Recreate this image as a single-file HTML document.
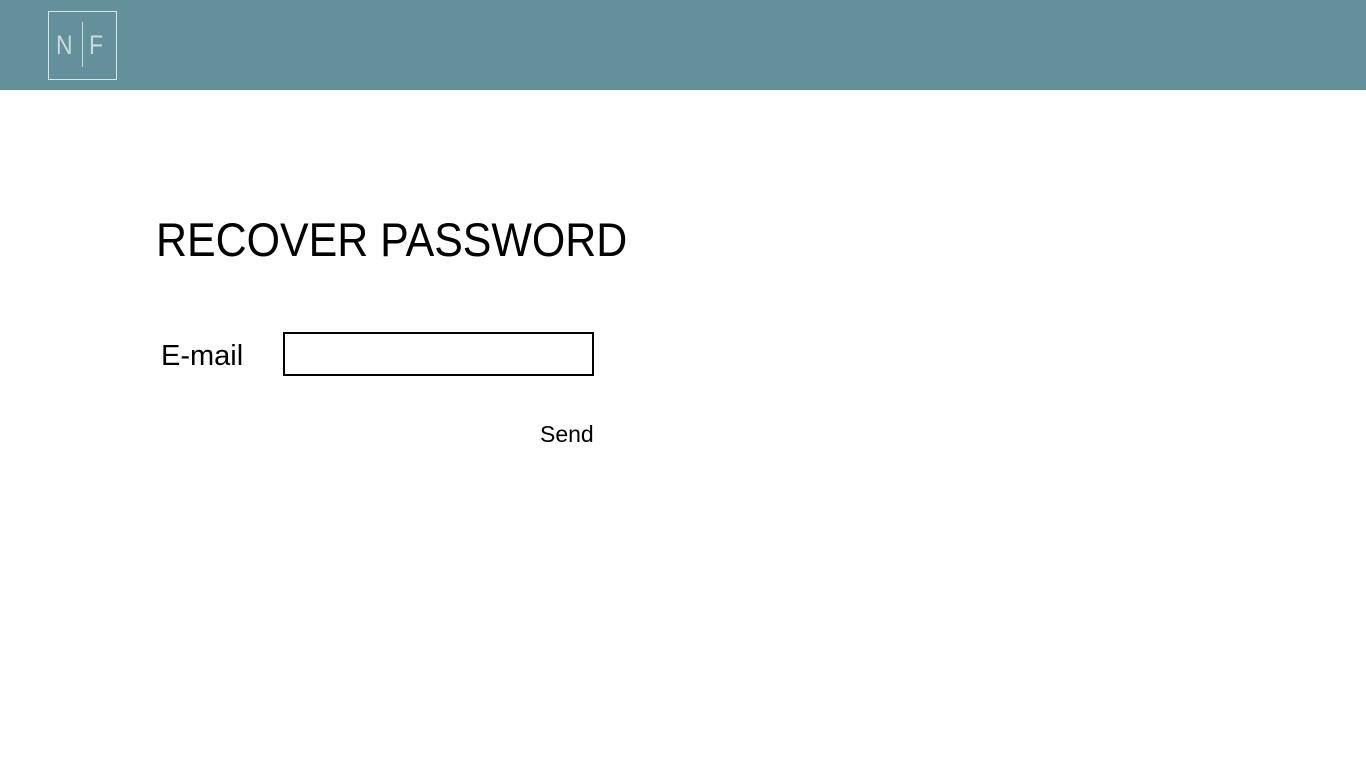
<!DOCTYPE html>
<html><head><style>
body{margin:0;width:1366px;height:768px;background:#fff;font-family:"Liberation Sans",sans-serif;position:relative;overflow:hidden}
.hdr{position:absolute;left:0;top:0;width:1366px;height:90px;background:#64909c}
.logo{position:absolute;left:48px;top:11px;width:67px;height:67px;border:1px solid #d8e4e7}
.logo .n{position:absolute;left:7px;top:20px;font-size:27px;color:#c9dade;line-height:27px;transform:scaleX(0.85);transform-origin:left}
.logo .f{position:absolute;left:40px;top:20px;font-size:27px;color:#c9dade;line-height:27px;transform:scaleX(0.85);transform-origin:left}
.logo .bar{position:absolute;left:33px;top:10px;width:1px;height:45px;background:#c8d8dc}
h1{position:absolute;left:156px;top:214px;margin:0;font-weight:normal;font-size:47px;line-height:52px;color:#000;transform:scaleX(0.913);transform-origin:left;white-space:nowrap}
.lbl{position:absolute;left:161px;top:339px;font-size:29px;line-height:34px}
.inp{position:absolute;left:283px;top:332px;width:307px;height:40px;border:2px solid #000}
.send{position:absolute;left:540px;top:421px;font-size:23px;line-height:26px}
</style></head><body>
<div class="hdr"><div class="logo"><span class="n">N</span><div class="bar"></div><span class="f">F</span></div></div>
<h1>RECOVER PASSWORD</h1>
<div class="lbl">E-mail</div>
<div class="inp"></div>
<div class="send">Send</div>
</body></html>
